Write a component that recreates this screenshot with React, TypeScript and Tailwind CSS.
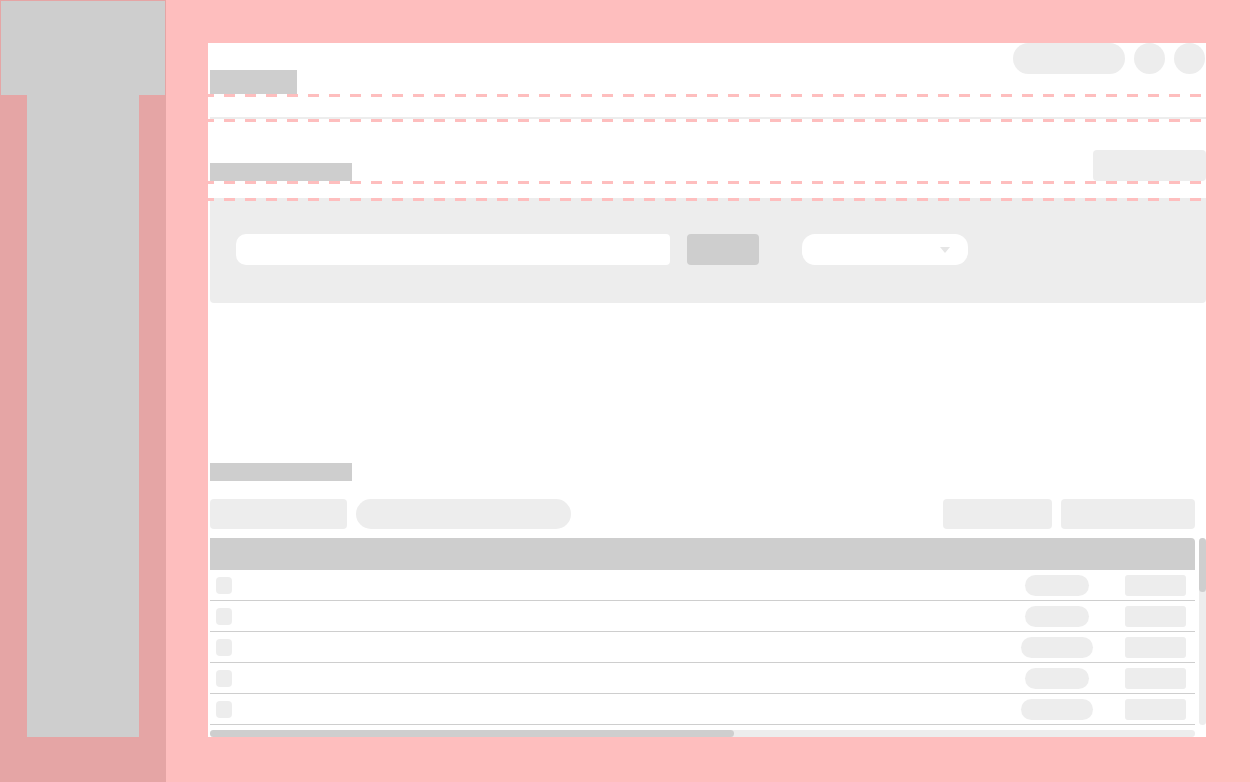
import React from "react";

const Dashed = () => (
  <svg
    className="-ml-[2px] block h-[3px] w-[998px] shrink-0"
    width="998"
    height="3"
    viewBox="0 0 998 3"
    shapeRendering="crispEdges"
  >
    <line
      x1="0"
      y1="1.5"
      x2="998"
      y2="1.5"
      stroke="#febebe"
      strokeWidth="3"
      strokeDasharray="11 10"
      strokeDashoffset="5"
    />
  </svg>
);

const rows = [64, 64, 72, 64, 72];

export default function App() {
  return (
    <div className="flex h-[782px] w-[1250px] overflow-hidden bg-[#febebe]">
      {/* Sidebar */}
      <div className="flex h-[782px] w-[166px] shrink-0 flex-col bg-[#e5a5a5]">
        <div className="ml-px mt-px h-[94px] w-[164px] bg-[#cecece]" />
        <div className="ml-[27px] h-[642px] w-[112px] bg-[#cecece]" />
      </div>

      {/* Main */}
      <div className="flex-1 pl-[42px] pt-[43px]">
        <div className="flex h-[694px] w-[998px] flex-col bg-white pl-[2px]">
          {/* header row */}
          <div className="flex h-[51px] shrink-0 justify-between">
            <div className="h-[24px] w-[87px] self-end bg-[#cecece]" />
            <div className="flex gap-[9px] self-start pr-px">
              <div className="h-[31px] w-[112px] rounded-full bg-[#ededed]" />
              <div className="h-[31px] w-[31px] rounded-full bg-[#ededed]" />
              <div className="h-[31px] w-[31px] rounded-full bg-[#ededed]" />
            </div>
          </div>
          <Dashed />
          <div className="h-[20px] shrink-0" />
          <div className="h-[2px] shrink-0 bg-[#ededed]" />
          <Dashed />

          {/* section title row */}
          <div className="flex h-[59px] shrink-0 items-end justify-between">
            <div className="h-[18px] w-[142px] bg-[#cecece]" />
            <div className="h-[31px] w-[113px] rounded-[4px] bg-[#ededed]" />
          </div>
          <Dashed />
          <div className="h-[14px] shrink-0" />

          {/* filter panel */}
          <div className="flex h-[105px] shrink-0 flex-col rounded-b-[4px] bg-[#ededed]">
            <Dashed />
            <div className="flex items-start pl-[26px] pt-[33px]">
              <div className="h-[31px] w-[434px] rounded-l-[10px] rounded-r-[4px] bg-white" />
              <div className="ml-[17px] h-[31px] w-[72px] rounded-[4px] bg-[#cecece]" />
              <div className="ml-[43px] flex h-[31px] w-[166px] items-center justify-end rounded-[13px] bg-white pr-[18px]">
                <svg width="10" height="6" viewBox="0 0 10 6">
                  <polygon points="0,0 10,0 5,6" fill="#e6e6e6" />
                </svg>
              </div>
            </div>
          </div>

          <div className="h-[160px] shrink-0" />

          {/* list section */}
          <div className="h-[18px] w-[142px] shrink-0 bg-[#cecece]" />
          <div className="h-[18px] shrink-0" />
          <div className="flex h-[30px] w-[985px] shrink-0 justify-between">
            <div className="flex gap-[9px]">
              <div className="h-[30px] w-[137px] rounded-[4px] bg-[#ededed]" />
              <div className="h-[30px] w-[215px] rounded-[15px] bg-[#ededed]" />
            </div>
            <div className="flex gap-[9px]">
              <div className="h-[30px] w-[109px] rounded-[4px] bg-[#ededed]" />
              <div className="h-[30px] w-[134px] rounded-[4px] bg-[#ededed]" />
            </div>
          </div>
          <div className="h-[9px] shrink-0" />

          <div className="flex shrink-0 gap-[4px]">
            <div className="flex w-[985px] flex-col">
              <div className="h-[32px] rounded-tr-[4px] bg-[#cecece]" />
              {rows.map((w, i) => (
                <div
                  key={i}
                  className="flex h-[31px] items-center border-b border-[#cecece] pr-[9px]"
                >
                  <div className="ml-[6px] h-[17px] w-[16px] rounded-[4px] bg-[#ededed]" />
                  <div className="flex-1" />
                  <div className="flex w-[80px] justify-center">
                    {w === 64 ? (
                      <div className="h-[21px] w-[64px] rounded-full bg-[#ededed]" />
                    ) : (
                      <div className="h-[21px] w-[72px] rounded-full bg-[#ededed]" />
                    )}
                  </div>
                  <div className="ml-[28px] h-[21px] w-[61px] rounded-[3px] bg-[#ededed]" />
                </div>
              ))}
            </div>
            <div className="flex h-[187px] w-[7px] flex-col rounded-full bg-[#ededed]">
              <div className="h-[54px] w-[7px] rounded-full bg-[#cecece]" />
            </div>
          </div>
          <div className="h-[5px] shrink-0" />
          <div className="h-[7px] w-[985px] shrink-0 rounded-full bg-[#ededed]">
            <div className="h-[7px] w-[524px] rounded-full bg-[#cecece]" />
          </div>
        </div>
      </div>
    </div>
  );
}
